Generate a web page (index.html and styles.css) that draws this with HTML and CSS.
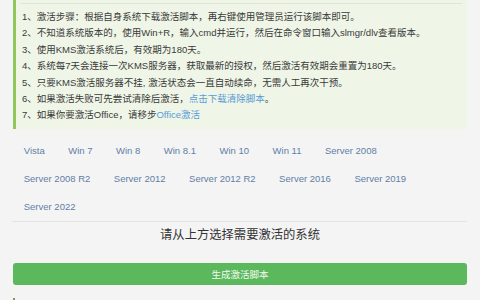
FILE: index.html
```html
<!DOCTYPE html>
<html lang="zh-CN">
<head>
<meta charset="utf-8">
<title>KMS激活</title>
<link rel="stylesheet" href="styles.css">
</head>
<body>
<div class="wrap">
  <div class="tip">
    <div class="tip-rule"></div>
    <ul class="steps">
      <li>1、激活步骤：根据自身系统下载激活脚本，再右键使用管理员运行该脚本即可。</li>
      <li>2、不知道系统版本的，使用Win+R，输入cmd并运行，然后在命令窗口输入slmgr/dlv查看版本。</li>
      <li>3、使用KMS激活系统后，有效期为180天。</li>
      <li>4、系统每7天会连接一次KMS服务器，获取最新的授权，然后激活有效期会重置为180天。</li>
      <li>5、只要KMS激活服务器不挂, 激活状态会一直自动续命，无需人工再次干预。</li>
      <li>6、如果激活失败可先尝试清除后激活，<a class="link" href="#">点击下载清除脚本</a>。</li>
      <li>7、如果你要激活Office，请移步<a class="link" href="#">Office激活</a></li>
    </ul>
  </div>
  <div class="os-list">
    <span class="os">Vista</span><span class="os">Win 7</span><span class="os">Win 8</span><span class="os">Win 8.1</span><span class="os">Win 10</span><span class="os">Win 11</span><span class="os">Server 2008</span><span class="os">Server 2008 R2</span><span class="os">Server 2012</span><span class="os">Server 2012 R2</span><span class="os">Server 2016</span><span class="os">Server 2019</span><span class="os">Server 2022</span>
  </div>
  <h2 class="prompt">请从上方选择需要激活的系统</h2>
  <button class="gen-btn" type="button">生成激活脚本</button>
  <div class="next-mark"></div>
</div>
</body>
</html>
```
FILE: styles.css
```css
html, body {
  margin: 0;
  padding: 0;
  background: #f4f4f4;
  height: 300px;
  overflow: hidden;
}
body {
  font-family: "Liberation Sans", "Noto Sans CJK SC", sans-serif;
  color: #333;
}
.wrap {
  padding: 0 13px;
}
.tip {
  background: #eff6e7;
  border-left: 3px solid #8fc65e;
  padding: 3px 5px 5px 4px;
}
.tip-rule {
  height: 1px;
  background: #dfe6d8;
  margin: 0 0 5px 0;
}
.steps {
  list-style: none;
  margin: 0;
  padding: 0 0 0 2px;
  font-size: 9.5px;
  line-height: 16.4px;
  color: #3a3a3a;
}
.link {
  color: #5a9bd6;
  text-decoration: none;
}
.os-list {
  margin: 8px 0 0 -1px;
  display: flex;
  flex-wrap: wrap;
  border-bottom: 1px solid #e3e3e3;
}
.os {
  display: block;
  padding: 0 11.75px;
  height: 28px;
  line-height: 28px;
  font-size: 9.5px;
  color: #5f7fa6;
  white-space: nowrap;
}
.prompt {
  margin: 4px 0 0;
  text-align: center;
  font-size: 12.3px;
  line-height: 18px;
  font-weight: normal;
  color: #333;
}
.gen-btn {
  display: block;
  width: 100%;
  margin-top: 19px;
  height: 22px;
  border: 0;
  border-radius: 3px;
  background: #5cb85c;
  color: #f2fbf2;
  font-family: "Liberation Sans", "Noto Sans CJK SC", sans-serif;
  font-size: 9.5px;
  padding: 0;
}
.next-mark {
  margin-top: 13px;
  width: 2px;
  height: 3px;
  background: #7a9a5a;
}
```
